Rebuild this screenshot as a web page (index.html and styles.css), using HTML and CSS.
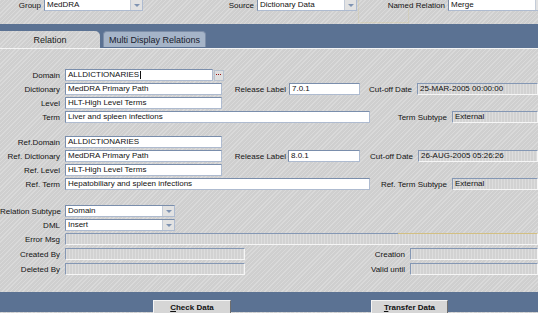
FILE: index.html
```html
<!DOCTYPE html>
<html>
<head>
<meta charset="utf-8">
<link rel="stylesheet" href="styles.css">
</head>
<body>
<div class="page">
  <div class="top">
    <span class="lb w44">Group</span>
    <div class="fld sel w99">MedDRA<span class="arr"></span></div>
    <span class="lb w114">Source</span>
    <div class="fld sel w100">Dictionary Data<span class="arr"></span></div>
    <span class="lb w91">Named Relation</span>
    <div class="fld sel w100">Merge<span class="arr"></span></div>
    <span class="focus"></span>
  </div>

  <div class="band">
    <div class="tab active">Relation</div>
    <div class="tab">Multi Display Relations</div>
  </div>

  <div class="body">
    <div class="row">
      <span class="lb w65">Domain</span>
      <div class="fld w148">ALLDICTIONARIES<span class="caret"></span></div>
      <span class="dots"></span>
    </div>
    <div class="row">
      <span class="lb w65">Dictionary</span>
      <div class="fld w157">MedDRA Primary Path</div>
      <span class="lb w67 p3">Release Label</span>
      <div class="fld w71">7.0.1</div>
      <span class="lb w57">Cut-off Date</span>
      <div class="fld dis grow">25-MAR-2005 00:00:00</div>
    </div>
    <div class="row">
      <span class="lb w65">Level</span>
      <div class="fld w157">HLT-High Level Terms</div>
    </div>
    <div class="row">
      <span class="lb w65">Term</span>
      <div class="fld w305">Liver and spleen infections</div>
      <span class="lb w82">Term Subtype</span>
      <div class="fld dis grow">External</div>
    </div>

    <div class="row sect">
      <span class="lb w65">Ref.Domain</span>
      <div class="fld w157">ALLDICTIONARIES</div>
    </div>
    <div class="row">
      <span class="lb w65">Ref. Dictionary</span>
      <div class="fld w157">MedDRA Primary Path</div>
      <span class="lb w66 p2">Release Label</span>
      <div class="fld w72">8.0.1</div>
      <span class="lb w58">Cut-off Date</span>
      <div class="fld dis grow">26-AUG-2005 05:26:26</div>
    </div>
    <div class="row">
      <span class="lb w65">Ref. Level</span>
      <div class="fld w157">HLT-High Level Terms</div>
    </div>
    <div class="row">
      <span class="lb w65">Ref. Term</span>
      <div class="fld w305">Hepatobiliary and spleen infections</div>
      <span class="lb w82">Ref. Term Subtype</span>
      <div class="fld dis grow">External</div>
    </div>

    <div class="row sect2">
      <span class="lb w65">Relation Subtype</span>
      <div class="fld sel w110">Domain<span class="arr"></span></div>
    </div>
    <div class="row">
      <span class="lb w65">DML</span>
      <div class="fld sel w110">Insert<span class="arr"></span></div>
    </div>
    <div class="row sp3">
      <span class="lb w65">Error Msg</span>
      <div class="fld dis grow errmsg"></div>
    </div>
    <div class="row sp3">
      <span class="lb w65">Created By</span>
      <div class="fld dis w180"></div>
      <span class="lb w165">Creation</span>
      <div class="fld dis grow"></div>
    </div>
    <div class="row">
      <span class="lb w65">Deleted By</span>
      <div class="fld dis w180"></div>
      <span class="lb w165">Valid until</span>
      <div class="fld dis grow"></div>
    </div>
  </div>

  <div class="foot">
    <button class="btn"><u>C</u>heck Data</button>
    <button class="btn btn2"><u>T</u>ransfer Data</button>
  </div>
</div>
</body>
</html>
```

FILE: styles.css
```css
html, body {
  margin: 0;
  padding: 0;
}
body {
  width: 538px;
  height: 313px;
  overflow: hidden;
  font-family: "Liberation Sans", Arial, sans-serif;
  font-size: 8px;
  color: #141414;
}
.page {
  width: 538px;
  height: 313px;
  overflow: hidden;
  background-color: #cfcfcf;
  background-image: repeating-linear-gradient(135deg, rgba(255,255,255,0.22) 0 1px, transparent 1px 3px);
}

/* top row */
.top {
  position: relative;
  height: 24px;
  display: flex;
  align-items: flex-start;
}
.top .fld { margin-top: -1px; }
.top .lb { line-height: 11px; padding-right: 3px; }
.focus {
  position: absolute;
  left: 358px;
  top: -1px;
  width: 49px;
  height: 22px;
  border: 1px solid rgba(214, 196, 120, 0.22);
  pointer-events: none;
}

/* tab band */
.band {
  height: 24px;
  background: #5b7293;
  display: flex;
  align-items: flex-end;
  box-sizing: border-box;
  padding-top: 7px;
}
.tab {
  box-sizing: border-box;
  font-size: 9px;
  text-align: center;
}
.tab.active {
  width: 100px;
  height: 17px;
  line-height: 19px;
  background-color: #cfcfcf;
  background-image: repeating-linear-gradient(135deg, rgba(255,255,255,0.22) 0 1px, transparent 1px 3px);
  border-top-right-radius: 5px;
  color: #1a1a1a;
}
.tab:not(.active) {
  width: 103px;
  height: 16px;
  margin-left: 3px;
  margin-bottom: 1px;
  line-height: 16px;
  background: #a5b4c8;
  border: 1px solid #7d8ea8;
  border-bottom: none;
  border-radius: 4px 4px 0 0;
  color: #18202c;
}

/* body */
.body {
  border-top: 1px solid #f4f4f4;
  height: 244px;
  box-sizing: border-box;
  padding-top: 20px;
}
.row {
  display: flex;
  align-items: center;
  height: 12px;
  margin-bottom: 2px;
}
.row.sect { margin-top: 13px; }
.row.sect2 { margin-top: 15px; }
.row.sp3 { margin-bottom: 3px; }

.lb {
  flex: none;
  box-sizing: border-box;
  text-align: right;
  padding-right: 5px;
  white-space: nowrap;
}
.lb.p3 { padding-right: 3px; }
.lb.p2 { padding-right: 2px; }
.w44 { width: 44px; }
.w114 { width: 114px; }
.w91 { width: 91px; }
.w65 { width: 65px; }
.w67 { width: 67px; }
.w66 { width: 66px; }
.w57 { width: 57px; }
.w58 { width: 58px; }
.w82 { width: 82px; }
.w165 { width: 165px; }

.fld {
  flex: none;
  position: relative;
  box-sizing: border-box;
  height: 12px;
  line-height: 10px;
  padding-left: 2px;
  background: #fff;
  border: 1px solid;
  border-color: #7a8eac #aebbd0 #aebbd0 #7a8eac;
  white-space: nowrap;
  overflow: hidden;
  color: #111;
}
.w99 { width: 99px; }
.w100 { width: 100px; }
.w110 { width: 110px; }
.w148 { width: 148px; }
.w157 { width: 157px; }
.w71 { width: 71px; }
.w72 { width: 72px; }
.w305 { width: 305px; }
.w180 { width: 180px; }
.grow { flex: 1 1 auto; }

.fld.dis {
  background-color: #d2d2d2;
  background-image: repeating-linear-gradient(90deg, rgba(255,255,255,0.25) 0 1px, transparent 1px 3px);
  border-color: #8497b4 #f6f6f6 #f6f6f6 #8497b4;
}
.fld.errmsg {
  border-top-color: transparent;
  background-image:
    linear-gradient(to right, #8497b4 333px, #d2bf82 333px),
    repeating-linear-gradient(90deg, rgba(255,255,255,0.25) 0 1px, transparent 1px 3px);
  background-size: 100% 1px, auto;
  background-position: 0 0, 0 0;
  background-repeat: no-repeat, repeat;
  background-origin: border-box, padding-box;
}

.caret {
  display: inline-block;
  width: 1px;
  height: 8px;
  background: #111;
  vertical-align: middle;
  margin-left: 1px;
}

.sel { padding-right: 12px; }
.arr {
  position: absolute;
  right: 0;
  top: 0;
  bottom: 0;
  width: 11px;
  background: #e2e2e2;
  border-left: 1px solid #c4ccd8;
}
.arr::after {
  content: "";
  position: absolute;
  left: 3px;
  top: 4px;
  border-left: 3px solid transparent;
  border-right: 3px solid transparent;
  border-top: 3px solid #7f93b2;
}

.dots {
  flex: none;
  position: relative;
  width: 10px;
  height: 11px;
  margin-left: 1px;
  box-sizing: border-box;
  background: #dedede;
  border: 1px solid #b8c2d0;
}
.dots::after {
  content: "";
  position: absolute;
  left: 1px;
  top: 3px;
  width: 6px;
  height: 1px;
  background: repeating-linear-gradient(90deg, #9a1414 0 1px, transparent 1px 2px);
}

/* footer */
.foot {
  height: 20px;
  background: #5b7293;
  display: flex;
  align-items: flex-start;
  box-sizing: border-box;
  padding-top: 8px;
  padding-left: 153px;
}
.btn {
  width: 78px;
  height: 15px;
  margin: 0;
  padding: 0;
  background: #d6d6d6;
  border: 1px solid;
  border-color: #f4f4f4 #6e6e6e #6e6e6e #f4f4f4;
  font-family: "Liberation Sans", Arial, sans-serif;
  font-size: 8px;
  font-weight: bold;
  color: #111;
  line-height: 11px;
  text-align: center;
}
.btn2 {
  width: 77px;
  margin-left: 140px;
}
```
